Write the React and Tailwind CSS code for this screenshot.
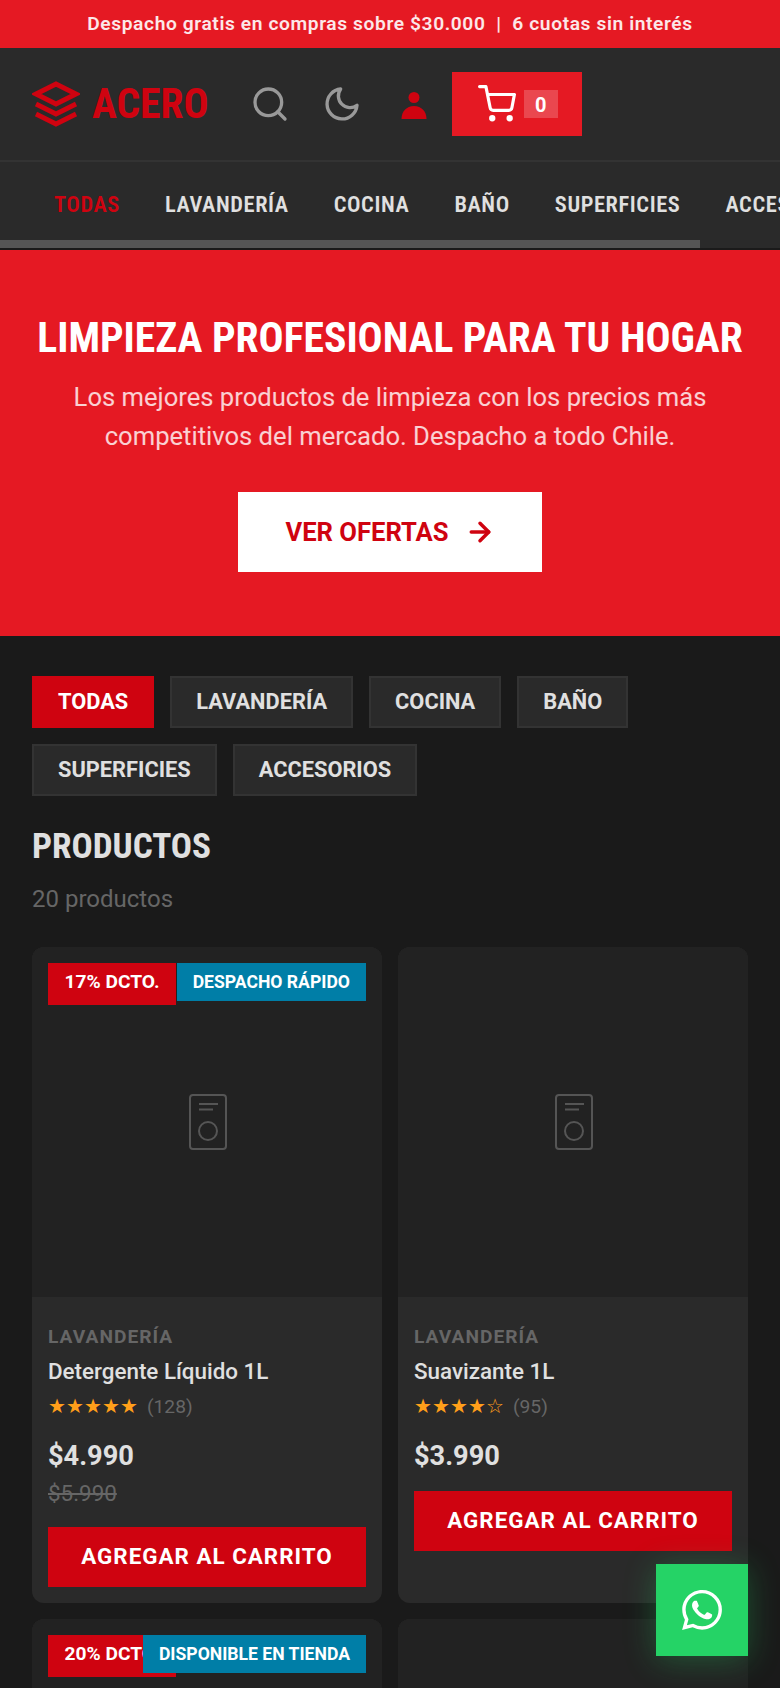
import { ArrowRight } from 'lucide-react'

const condensed = { fontStretch: '75%' }
const navItems = ['LAVANDERÍA', 'COCINA', 'BAÑO', 'SUPERFICIES', 'ACCESORIOS']
const filters = ['TODAS', 'LAVANDERÍA', 'COCINA', 'BAÑO', 'SUPERFICIES', 'ACCESORIOS']

function WhatsAppIcon({ size }) {
  return (
    <svg width={size} height={size} viewBox="0 0 24 24" fill="currentColor">
      <path d="M17.472 14.382c-.297-.149-1.758-.867-2.03-.967-.273-.099-.471-.148-.67.15-.197.297-.767.966-.94 1.164-.173.199-.347.223-.644.075-.297-.15-1.255-.463-2.39-1.475-.883-.788-1.48-1.761-1.653-2.059-.173-.297-.018-.458.13-.606.134-.133.298-.347.446-.52.149-.174.198-.298.298-.497.099-.198.05-.371-.025-.52-.075-.149-.669-1.612-.916-2.207-.242-.579-.487-.5-.669-.51-.173-.008-.371-.01-.57-.01-.198 0-.52.074-.792.372-.272.297-1.04 1.016-1.04 2.479 0 1.462 1.065 2.875 1.213 3.074.149.198 2.096 3.2 5.077 4.487.709.306 1.262.489 1.694.625.712.227 1.36.195 1.871.118.571-.085 1.758-.719 2.006-1.413.248-.694.248-1.289.173-1.413-.074-.124-.272-.198-.57-.347m-5.421 7.403h-.004a9.87 9.87 0 01-5.031-1.378l-.361-.214-3.741.982.998-3.648-.235-.374a9.86 9.86 0 01-1.51-5.26c.001-5.45 4.436-9.884 9.888-9.884 2.64 0 5.122 1.03 6.988 2.898a9.825 9.825 0 012.893 6.994c-.003 5.45-4.437 9.884-9.885 9.884m8.413-18.297A11.815 11.815 0 0012.05 0C5.495 0 .16 5.335.157 11.892c0 2.096.547 4.142 1.588 5.945L.057 24l6.305-1.654a11.882 11.882 0 005.683 1.448h.005c6.554 0 11.89-5.335 11.893-11.893a11.821 11.821 0 00-3.48-8.413z" />
    </svg>
  )
}

function PlaceholderIcon() {
  return (
    <svg className="ml-[2px]" width="40" height="58" viewBox="0 0 40 58" fill="none" stroke="#555" strokeWidth="2">
      <rect x="2" y="2" width="36" height="54" rx="3" />
      <path d="M11 11h19M11 16.5h14" />
      <circle cx="20" cy="38" r="9" />
    </svg>
  )
}

function Stars({ filled }) {
  return (
    <span className="text-[19.6px] text-[#ff9f1a]">
      {'★'.repeat(filled)}
      {'☆'.repeat(5 - filled)}
    </span>
  )
}

function ProductCard({ discount, tag, name, stars, reviews, price, oldPrice }) {
  return (
    <div className="overflow-hidden rounded-xl bg-[#2a2a2a]">
      <div className="relative flex h-[350px] items-center justify-center bg-[#222222]">
        {discount && (
          <span className="absolute top-4 left-4 w-[128px] bg-[#cf0310] pt-[6px] pb-[10px] text-center text-[19.2px] leading-[26px] font-bold whitespace-nowrap text-white">
            {discount}
          </span>
        )}
        {tag && (
          <span className="absolute top-4 right-4 bg-[#007ea7] px-4 py-2 text-[17.6px] leading-[22px] font-bold whitespace-nowrap text-white">
            {tag}
          </span>
        )}
        <PlaceholderIcon />
      </div>
      {name && (
        <div className="px-4 pt-7 pb-4">
          <div className="text-[19.2px] leading-6 font-bold tracking-[1px] text-[#666666]">LAVANDERÍA</div>
          <h3 className="mt-2 text-[22.4px] leading-7 font-medium text-[#e0e0e0]">{name}</h3>
          <div className="mt-[10px] flex h-6 items-center gap-[9px]">
            <Stars filled={stars} />
            <span className="text-[19.2px] text-[#666666]">({reviews})</span>
          </div>
          <div className="mt-[17px] text-[27.2px] leading-10 font-bold text-[#e0e0e0]">{price}</div>
          {oldPrice && <div className="mt-[3px] mb-[5px] text-[22.4px] leading-7 text-[#666666] line-through">{oldPrice}</div>}
          <button className="mt-[15px] h-[60px] w-full bg-[#cf0310] text-[22.4px] font-bold tracking-[1px] text-white" type="button">
            AGREGAR AL CARRITO
          </button>
        </div>
      )}
    </div>
  )
}

export default function App() {
  return (
    <div className="relative h-[1688px] w-[780px] overflow-hidden bg-[#1a1a1a] font-['Roboto',sans-serif]">
      <div className="flex h-12 items-center justify-center bg-[#e51923] text-[19.2px] font-semibold tracking-[0.6px] text-white/90">
        Despacho gratis en compras sobre $30.000&nbsp; |&nbsp; 6 cuotas sin interés
      </div>

      <header className="bg-[#2a2a2a]">
        <div className="flex h-[114px] items-center border-b-2 border-[#333333] pl-8">
          <svg width="48" height="48" viewBox="0 0 24 24" fill="none" stroke="#cf0310" strokeWidth="2.4">
            <path d="M12 2 2 7l10 5 10-5z" />
            <path d="m2 17 10 5 10-5" />
            <path d="m2 12 10 5 10-5" />
          </svg>
          <span className="ml-3 text-[41.6px] leading-none font-bold text-[#cf0310]" style={condensed}>ACERO</span>
          <svg className="ml-[41px]" width="40" height="40" viewBox="0 0 24 24" fill="none" stroke="#999999" strokeWidth="2" strokeLinecap="round" strokeLinejoin="round">
            <circle cx="11" cy="11" r="8" />
            <path d="m21 21-4.35-4.35" />
          </svg>
          <svg className="ml-8" width="40" height="40" viewBox="0 0 24 24" fill="none" stroke="#999999" strokeWidth="2" strokeLinecap="round" strokeLinejoin="round">
            <path d="M21 12.79A9 9 0 1 1 11.21 3 7 7 0 0 0 21 12.79z" />
          </svg>
          <svg className="ml-8" width="40" height="40" viewBox="0 0 24 24" fill="#cf0310">
            <circle cx="12" cy="8.1" r="3.3" />
            <path d="M4.5 21c0-4.5 3-7.8 7.5-7.8s7.5 3.3 7.5 7.8z" />
          </svg>
          <div className="ml-[18px] flex h-16 w-[130px] items-center bg-[#e51923] pl-[26px]">
            <svg width="38" height="38" viewBox="0 0 24 24" fill="none" stroke="#ffffff" strokeWidth="2" strokeLinecap="round" strokeLinejoin="round">
              <circle cx="9" cy="21" r="1" />
              <circle cx="20" cy="21" r="1" />
              <path d="M1 1h4l2.68 13.39a2 2 0 0 0 2 1.61h9.72a2 2 0 0 0 2-1.61L23 6H6" />
            </svg>
            <span className="ml-2 grid h-7 w-[34px] place-items-center bg-white/20 text-[20px] font-bold text-white">0</span>
          </div>
        </div>
        <div className="overflow-hidden">
          <nav className="flex h-[78px] items-center gap-[45px] pt-[7px] pl-[54px] text-[22.4px] font-semibold tracking-[0.6px] whitespace-nowrap text-[#e0e0e0]" style={condensed}>
            <span className="text-[#cf0310]">TODAS</span>
            {navItems.map((item) => (
              <span key={item}>{item}</span>
            ))}
          </nav>
          <div className="h-[8px] w-[700px] bg-[#555555]" />
        </div>
        <div className="h-[2px] bg-[#1a1a1a]" />
      </header>

      <section className="flex h-[386px] flex-col items-center bg-[#e51923] px-8 pt-[64px] text-center text-white">
        <h1 className="text-[41.6px] leading-[48px] font-bold whitespace-nowrap" style={condensed}>LIMPIEZA PROFESIONAL PARA TU HOGAR</h1>
        <p className="mt-4 w-[680px] text-[25.6px] leading-[39px] text-white/80">
          Los mejores productos de limpieza con los precios más competitivos del mercado. Despacho a todo Chile.
        </p>
        <button className="mt-9 flex h-20 w-[304px] items-center justify-center gap-4 bg-white text-[25.6px] font-bold text-[#cf0310]" type="button">
          <span>VER OFERTAS</span>
          <ArrowRight size={30} strokeWidth={2.8} />
        </button>
      </section>

      <main className="px-8 pt-10">
        <div className="flex flex-wrap gap-4">
          {filters.map((item, index) => (
            <button
              key={item}
              className={index === 0
                ? 'h-[52px] border-2 border-[#cf0310] bg-[#cf0310] px-6 text-[21.8px] font-bold text-white'
                : 'h-[52px] border-2 border-[#333333] bg-[#2a2a2a] px-6 text-[21.8px] font-bold text-[#e0e0e0]'}
              type="button"
            >
              {item}
            </button>
          ))}
        </div>
        <h2 className="mt-[27px] text-[35.2px] leading-[46px] font-bold text-[#e0e0e0]" style={condensed}>PRODUCTOS</h2>
        <p className="mt-[14px] text-[24px] leading-[32px] text-[#666666]">20 productos</p>

        <div className="mt-8 grid grid-cols-2 gap-4">
          <ProductCard discount="17% DCTO." tag="DESPACHO RÁPIDO" name="Detergente Líquido 1L" stars={5} reviews={128} price="$4.990" oldPrice="$5.990" />
          <ProductCard name="Suavizante 1L" stars={4} reviews={95} price="$3.990" />
          <ProductCard discount="20% DCTO." tag="DISPONIBLE EN TIENDA" />
          <ProductCard />
        </div>
      </main>

      <div className="absolute right-8 bottom-8 grid h-[92px] w-[92px] place-items-center bg-[#25d366] text-white shadow-[0_4px_32px_rgba(37,211,102,0.3)]">
        <WhatsAppIcon size={40} />
      </div>
    </div>
  )
}
